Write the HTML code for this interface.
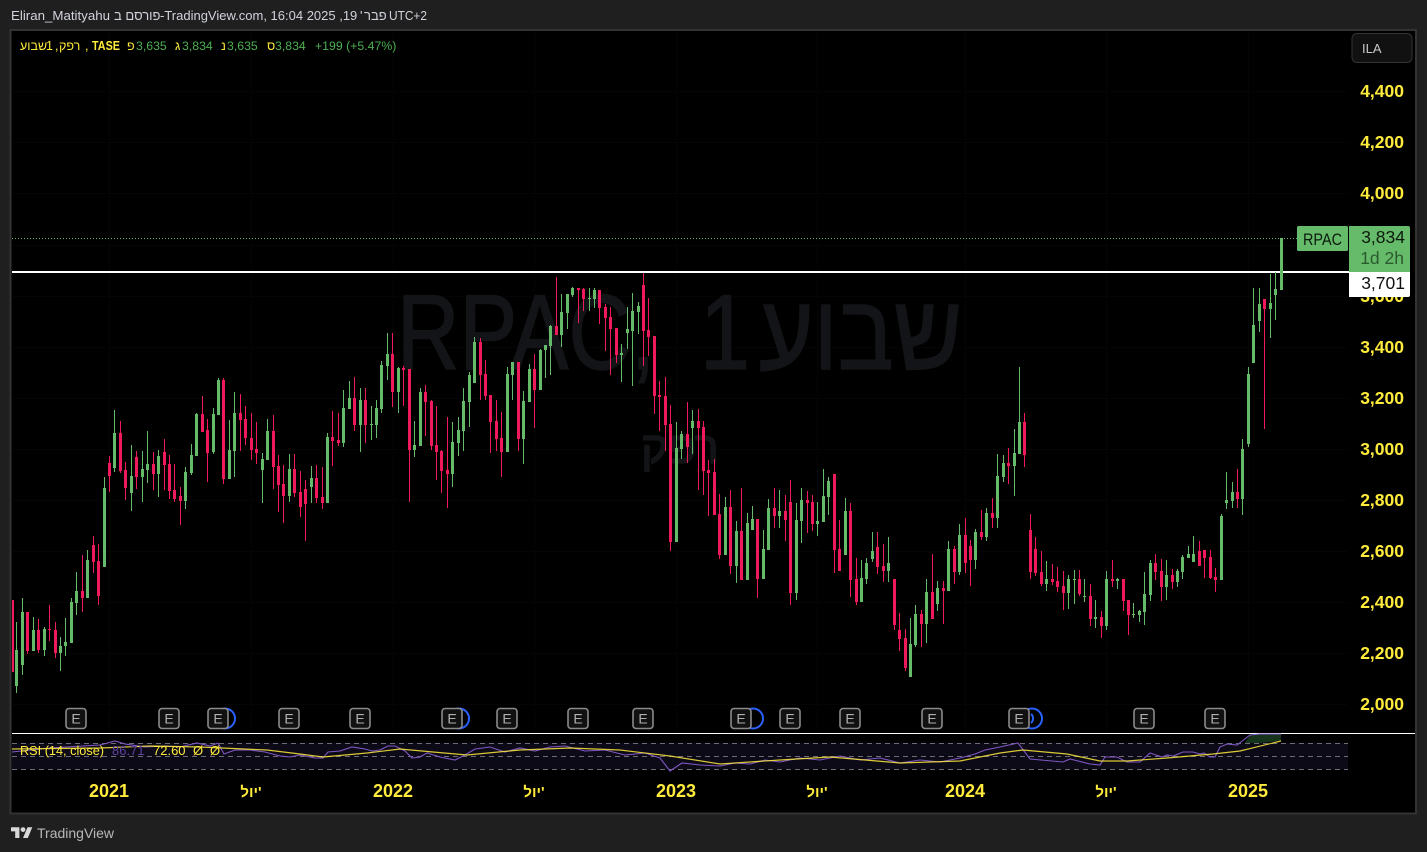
<!DOCTYPE html>
<html lang="he"><head><meta charset="utf-8"><title>RPAC</title>
<style>
html,body{margin:0;padding:0;background:#1f1f1f;width:1427px;height:852px;overflow:hidden}
svg{display:block;position:absolute;left:0;top:0}
text{font-family:"Liberation Sans","Noto Sans CJK JP",sans-serif}
.p{font-size:17.500px;font-weight:700;fill:#ffeb3b;text-anchor:end}
.t{font-size:18px;font-weight:700;fill:#ffeb3b;text-anchor:middle}
.y{font-size:15px;font-weight:700;fill:#ffeb3b;text-anchor:middle}
.l{font-size:12.500px;fill:#ffeb3b}
.g{font-size:12.300px;fill:#4caf50}
.r{font-size:13px;fill:#ffeb3b}
.h{font-size:13px;fill:#d1d4dc}
</style></head><body>
<svg width="1427" height="852" viewBox="0 0 1427 852" xmlns="http://www.w3.org/2000/svg">
<rect width="1427" height="852" fill="#1f1f1f"/>
<rect x="10.500" y="30" width="1405.500" height="783.500" fill="#000" stroke="#333" stroke-width="2"/>

<!-- grid -->
<path shape-rendering="crispEdges" stroke="#050505" stroke-width="1" fill="none" d="M109.500 32V733M251.500 32V733M393.500 32V733M534.500 32V733M676.500 32V733M817.500 32V733M965.500 32V733M1106.500 32V733M1248.500 32V733M12 91.500H1348M12 142.500H1348M12 193.500H1348M12 245.500H1348M12 296.500H1348M12 347.500H1348M12 398.500H1348M12 449.500H1348M12 500.500H1348M12 551.500H1348M12 602.500H1348M12 653.500H1348M12 704.500H1348"/>

<!-- watermark -->
<g fill="#131417" stroke="#131417" stroke-width="1.500">
<text x="397" y="369" font-size="107" textLength="258" lengthAdjust="spacingAndGlyphs">RPAC,</text>
<text x="700" y="369" font-size="107" textLength="50" lengthAdjust="spacingAndGlyphs">1</text>
<text x="759" y="369" font-size="107" textLength="203" lengthAdjust="spacingAndGlyphs">שבוע</text>
<text x="641" y="463" font-size="45" textLength="78" lengthAdjust="spacingAndGlyphs">רפק</text>
</g>

<!-- last price dotted + white line -->
<path shape-rendering="crispEdges" d="M12 238.500H1297" stroke="#66bb6a" stroke-width="1" stroke-dasharray="1 2" fill="none"/>
<rect x="12" y="271" width="1337" height="2" fill="#fff"/>

<!-- green candles -->
<path shape-rendering="crispEdges" fill="#66bb6a" d="M16 622h1V693h-1zM15 650h3V686h-3zM22 598h1V675h-1zM21 612h3V665h-3zM33 617h1V651h-1zM32 630h3V651h-3zM44 627h1V656h-1zM43 629h3V650h-3zM60 637h1V671h-1zM59 646h3V653h-3zM65 618h1V656h-1zM64 642h3V646h-3zM71 598h1V643h-1zM70 602h3V643h-3zM76 572h1V615h-1zM75 591h3V603h-3zM87 550h1V598h-1zM86 560h3V598h-3zM104 477h1V567h-1zM103 488h3V567h-3zM114 410h1V472h-1zM113 433h3V468h-3zM131 445h1V511h-1zM130 476h3V493h-3zM142 451h1V502h-1zM141 469h3V477h-3zM147 431h1V483h-1zM146 464h3V470h-3zM158 450h1V497h-1zM157 456h3V474h-3zM185 467h1V509h-1zM184 472h3V501h-3zM191 444h1V475h-1zM190 455h3V473h-3zM196 413h1V456h-1zM195 414h3V456h-3zM213 408h1V454h-1zM212 414h3V452h-3zM218 378h1V415h-1zM217 380h3V415h-3zM229 420h1V479h-1zM228 450h3V479h-3zM234 392h1V477h-1zM233 413h3V451h-3zM262 453h1V503h-1zM261 459h3V470h-3zM267 419h1V460h-1zM266 431h3V460h-3zM289 454h1V502h-1zM288 469h3V496h-3zM311 466h1V503h-1zM310 478h3V487h-3zM327 433h1V503h-1zM326 437h3V503h-3zM343 390h1V447h-1zM342 408h3V443h-3zM349 381h1V409h-1zM348 398h3V409h-3zM360 388h1V452h-1zM359 400h3V425h-3zM371 406h1V440h-1zM370 424h3V425h-3zM376 400h1V438h-1zM375 408h3V425h-3zM381 361h1V413h-1zM380 365h3V409h-3zM387 333h1V380h-1zM386 354h3V366h-3zM398 367h1V413h-1zM397 368h3V392h-3zM414 421h1V457h-1zM413 445h3V450h-3zM420 388h1V446h-1zM419 392h3V446h-3zM452 422h1V487h-1zM451 442h3V474h-3zM458 417h1V456h-1zM457 430h3V443h-3zM463 388h1V451h-1zM462 401h3V431h-3zM469 372h1V427h-1zM468 375h3V402h-3zM474 337h1V383h-1zM473 342h3V383h-3zM507 367h1V452h-1zM506 374h3V452h-3zM512 362h1V400h-1zM511 362h3V375h-3zM523 391h1V464h-1zM522 401h3V439h-3zM529 364h1V402h-1zM528 369h3V402h-3zM540 349h1V390h-1zM539 350h3V390h-3zM545 345h1V378h-1zM544 345h3V350h-3zM550 325h1V375h-1zM549 326h3V346h-3zM561 294h1V347h-1zM560 312h3V335h-3zM567 294h1V329h-1zM566 294h3V313h-3zM572 287h1V297h-1zM571 288h3V295h-3zM589 288h1V311h-1zM588 298h3V299h-3zM594 288h1V308h-1zM593 290h3V299h-3zM621 344h1V382h-1zM620 353h3V355h-3zM627 307h1V349h-1zM626 329h3V333h-3zM632 293h1V386h-1zM631 311h3V331h-3zM638 302h1V334h-1zM637 306h3V312h-3zM676 422h1V542h-1zM675 448h3V542h-3zM681 431h1V459h-1zM680 434h3V449h-3zM692 410h1V454h-1zM691 421h3V428h-3zM725 497h1V555h-1zM724 507h3V555h-3zM736 521h1V583h-1zM735 531h3V566h-3zM747 513h1V580h-1zM746 523h3V580h-3zM752 506h1V530h-1zM751 519h3V530h-3zM763 530h1V579h-1zM762 549h3V579h-3zM768 499h1V550h-1zM767 508h3V550h-3zM779 490h1V528h-1zM778 511h3V516h-3zM796 503h1V600h-1zM795 520h3V593h-3zM801 488h1V543h-1zM800 500h3V521h-3zM817 502h1V536h-1zM816 521h3V524h-3zM823 469h1V522h-1zM822 496h3V522h-3zM828 477h1V515h-1zM827 481h3V497h-3zM845 498h1V555h-1zM844 511h3V555h-3zM861 560h1V602h-1zM860 578h3V602h-3zM866 558h1V584h-1zM865 563h3V579h-3zM872 532h1V562h-1zM871 551h3V559h-3zM888 537h1V582h-1zM887 563h3V571h-3zM910 618h1V677h-1zM909 644h3V677h-3zM915 605h1V647h-1zM914 614h3V645h-3zM926 579h1V643h-1zM925 592h3V624h-3zM937 581h1V611h-1zM936 588h3V604h-3zM948 541h1V591h-1zM947 549h3V591h-3zM959 524h1V575h-1zM958 535h3V572h-3zM975 529h1V569h-1zM974 532h3V560h-3zM986 508h1V541h-1zM985 513h3V537h-3zM997 454h1V528h-1zM996 476h3V518h-3zM1003 455h1V482h-1zM1002 463h3V477h-3zM1014 429h1V496h-1zM1013 453h3V466h-3zM1019 367h1V454h-1zM1018 422h3V454h-3zM1046 561h1V591h-1zM1045 579h3V584h-3zM1068 575h1V609h-1zM1067 579h3V593h-3zM1074 570h1V604h-1zM1073 579h3V580h-3zM1084 579h1V602h-1zM1083 596h3V597h-3zM1095 600h1V628h-1zM1094 617h3V619h-3zM1106 571h1V630h-1zM1105 579h3V626h-3zM1117 578h1V589h-1zM1116 579h3V581h-3zM1133 603h1V618h-1zM1132 614h3V615h-3zM1139 610h1V622h-1zM1138 611h3V615h-3zM1144 572h1V625h-1zM1143 594h3V612h-3zM1150 560h1V601h-1zM1149 563h3V595h-3zM1166 560h1V600h-1zM1165 575h3V587h-3zM1177 569h1V587h-1zM1176 571h3V582h-3zM1182 555h1V579h-1zM1181 557h3V572h-3zM1188 546h1V558h-1zM1187 554h3V558h-3zM1193 536h1V562h-1zM1192 554h3V562h-3zM1221 514h1V580h-1zM1220 516h3V580h-3zM1226 472h1V509h-1zM1225 500h3V503h-3zM1232 482h1V508h-1zM1231 492h3V501h-3zM1242 439h1V515h-1zM1241 449h3V499h-3zM1248 367h1V447h-1zM1247 374h3V444h-3zM1253 288h1V363h-1zM1252 325h3V363h-3zM1259 288h1V332h-1zM1258 304h3V321h-3zM1270 274h1V338h-1zM1269 303h3V309h-3zM1275 272h1V320h-1zM1274 289h3V295h-3zM1280 238h3V290h-3z"/>

<!-- red candles -->
<path shape-rendering="crispEdges" fill="#ee1a5c" d="M12 600h2V672h-2zM27 612h1V654h-1zM26 612h3V651h-3zM38 619h1V653h-1zM37 630h3V650h-3zM49 605h1V641h-1zM48 629h3V630h-3zM55 622h1V658h-1zM54 630h3V653h-3zM82 555h1V612h-1zM81 591h3V598h-3zM93 536h1V573h-1zM92 545h3V562h-3zM98 544h1V605h-1zM97 561h3V596h-3zM109 456h1V492h-1zM108 463h3V476h-3zM120 421h1V473h-1zM119 433h3V471h-3zM125 462h1V500h-1zM124 470h3V488h-3zM136 451h1V489h-1zM135 457h3V477h-3zM153 452h1V490h-1zM152 464h3V474h-3zM164 439h1V490h-1zM163 452h3V465h-3zM169 455h1V499h-1zM168 464h3V491h-3zM174 464h1V502h-1zM173 490h3V499h-3zM180 487h1V525h-1zM179 496h3V501h-3zM202 396h1V432h-1zM201 414h3V432h-3zM207 419h1V482h-1zM206 430h3V453h-3zM223 378h1V484h-1zM222 380h3V479h-3zM240 394h1V451h-1zM239 413h3V420h-3zM245 406h1V445h-1zM244 419h3V438h-3zM251 413h1V460h-1zM250 438h3V450h-3zM256 422h1V464h-1zM255 449h3V453h-3zM273 415h1V489h-1zM272 431h3V467h-3zM278 455h1V512h-1zM277 466h3V485h-3zM283 465h1V523h-1zM282 484h3V496h-3zM294 454h1V497h-1zM293 469h3V493h-3zM300 471h1V517h-1zM299 492h3V507h-3zM305 480h1V541h-1zM304 489h3V504h-3zM316 465h1V503h-1zM315 478h3V498h-3zM322 467h1V509h-1zM321 497h3V503h-3zM332 411h1V466h-1zM331 437h3V441h-3zM338 413h1V446h-1zM337 440h3V443h-3zM354 377h1V431h-1zM353 398h3V425h-3zM365 388h1V443h-1zM364 400h3V425h-3zM392 333h1V407h-1zM391 354h3V392h-3zM403 366h1V406h-1zM402 368h3V370h-3zM409 369h1V502h-1zM408 369h3V450h-3zM425 385h1V436h-1zM424 392h3V402h-3zM431 400h1V450h-1zM430 401h3V446h-3zM436 406h1V480h-1zM435 445h3V452h-3zM441 450h1V493h-1zM440 451h3V471h-3zM447 417h1V508h-1zM446 470h3V474h-3zM480 338h1V400h-1zM479 342h3V375h-3zM485 360h1V400h-1zM484 374h3V396h-3zM490 395h1V453h-1zM489 395h3V422h-3zM496 400h1V451h-1zM495 421h3V439h-3zM501 412h1V477h-1zM500 438h3V452h-3zM518 362h1V451h-1zM517 362h3V439h-3zM534 354h1V428h-1zM533 369h3V390h-3zM556 277h1V335h-1zM555 326h3V335h-3zM578 288h1V323h-1zM577 288h3V290h-3zM583 288h1V311h-1zM582 289h3V299h-3zM599 290h1V324h-1zM598 290h3V308h-3zM605 304h1V351h-1zM604 307h3V318h-3zM610 307h1V375h-1zM609 317h3V329h-3zM616 328h1V363h-1zM615 328h3V355h-3zM643 273h1V366h-1zM642 285h3V331h-3zM648 298h1V356h-1zM647 330h3V337h-3zM654 336h1V414h-1zM653 336h3V396h-3zM659 381h1V431h-1zM658 395h3V397h-3zM665 377h1V451h-1zM664 396h3V425h-3zM670 405h1V551h-1zM669 424h3V542h-3zM687 402h1V463h-1zM686 434h3V447h-3zM698 409h1V490h-1zM697 421h3V428h-3zM703 421h1V495h-1zM702 427h3V471h-3zM708 460h1V516h-1zM707 470h3V473h-3zM714 459h1V515h-1zM713 472h3V515h-3zM719 494h1V559h-1zM718 514h3V555h-3zM730 490h1V574h-1zM729 507h3V566h-3zM741 488h1V580h-1zM740 531h3V580h-3zM757 519h1V598h-1zM756 519h3V579h-3zM774 488h1V528h-1zM773 508h3V516h-3zM785 495h1V541h-1zM784 511h3V520h-3zM790 480h1V605h-1zM789 502h3V593h-3zM807 491h1V533h-1zM806 500h3V503h-3zM812 495h1V531h-1zM811 502h3V524h-3zM834 474h1V573h-1zM833 474h3V550h-3zM839 520h1V571h-1zM838 549h3V571h-3zM850 503h1V597h-1zM849 511h3V580h-3zM856 558h1V605h-1zM855 579h3V602h-3zM877 532h1V574h-1zM876 547h3V567h-3zM883 544h1V582h-1zM882 566h3V571h-3zM894 579h1V630h-1zM893 579h3V625h-3zM899 613h1V651h-1zM898 630h3V639h-3zM905 629h1V671h-1zM904 638h3V668h-3zM921 610h1V647h-1zM920 614h3V624h-3zM932 554h1V619h-1zM931 592h3V619h-3zM943 581h1V624h-1zM942 588h3V591h-3zM954 546h1V584h-1zM953 549h3V572h-3zM965 518h1V573h-1zM964 535h3V563h-3zM970 540h1V586h-1zM969 546h3V560h-3zM981 510h1V540h-1zM980 532h3V537h-3zM992 498h1V528h-1zM991 513h3V518h-3zM1008 448h1V484h-1zM1007 463h3V466h-3zM1024 413h1V467h-1zM1023 422h3V455h-3zM1030 514h1V579h-1zM1029 530h3V572h-3zM1035 537h1V576h-1zM1034 549h3V573h-3zM1041 551h1V586h-1zM1040 572h3V584h-3zM1052 564h1V585h-1zM1051 579h3V582h-3zM1057 567h1V592h-1zM1056 581h3V587h-3zM1063 571h1V610h-1zM1062 586h3V593h-3zM1079 570h1V596h-1zM1078 579h3V594h-3zM1090 584h1V626h-1zM1089 596h3V619h-3zM1101 611h1V638h-1zM1100 617h3V626h-3zM1112 560h1V587h-1zM1111 579h3V581h-3zM1123 579h1V611h-1zM1122 579h3V601h-3zM1128 600h1V635h-1zM1127 600h3V615h-3zM1155 554h1V580h-1zM1154 563h3V572h-3zM1161 559h1V601h-1zM1160 571h3V587h-3zM1172 569h1V589h-1zM1171 575h3V582h-3zM1199 541h1V566h-1zM1198 551h3V566h-3zM1204 550h1V578h-1zM1203 550h3V558h-3zM1210 550h1V579h-1zM1209 557h3V578h-3zM1215 568h1V592h-1zM1214 577h3V580h-3zM1237 469h1V508h-1zM1236 492h3V499h-3zM1264 299h1V429h-1zM1263 299h3V309h-3z"/>

<!-- E markers -->
<g fill="none" stroke="#2962ff" stroke-width="2">
<circle cx="225" cy="718.500" r="10"/><circle cx="459" cy="718.500" r="10"/><circle cx="753" cy="718.500" r="10"/><circle cx="1032" cy="718.500" r="10"/>
<path d="M1031 714a6 6 0 0 1 0 9"/>
</g>
<g fill="#111" stroke="#8a8a8a" stroke-width="1.600">
<rect x="66" y="708.500" width="20" height="20" rx="3"/><rect x="159" y="708.500" width="20" height="20" rx="3"/><rect x="208" y="708.500" width="20" height="20" rx="3"/><rect x="279" y="708.500" width="20" height="20" rx="3"/><rect x="350" y="708.500" width="20" height="20" rx="3"/><rect x="442" y="708.500" width="20" height="20" rx="3"/><rect x="497" y="708.500" width="20" height="20" rx="3"/><rect x="568" y="708.500" width="20" height="20" rx="3"/><rect x="633" y="708.500" width="20" height="20" rx="3"/><rect x="731" y="708.500" width="20" height="20" rx="3"/><rect x="780" y="708.500" width="20" height="20" rx="3"/><rect x="840" y="708.500" width="20" height="20" rx="3"/><rect x="922" y="708.500" width="20" height="20" rx="3"/><rect x="1009" y="708.500" width="20" height="20" rx="3"/><rect x="1134" y="708.500" width="20" height="20" rx="3"/><rect x="1205" y="708.500" width="20" height="20" rx="3"/>
</g>
<g fill="#b0b0b0" font-size="14" text-anchor="middle">
<text x="76" y="723.500">E</text><text x="169" y="723.500">E</text><text x="218" y="723.500">E</text><text x="289" y="723.500">E</text><text x="360" y="723.500">E</text><text x="452" y="723.500">E</text><text x="507" y="723.500">E</text><text x="578" y="723.500">E</text><text x="643" y="723.500">E</text><text x="741" y="723.500">E</text><text x="790" y="723.500">E</text><text x="850" y="723.500">E</text><text x="932" y="723.500">E</text><text x="1019" y="723.500">E</text><text x="1144" y="723.500">E</text><text x="1215" y="723.500">E</text>
</g>

<!-- RSI pane -->
<rect x="12" y="733" width="1403" height="1" fill="#fff"/>
<rect x="12" y="743" width="1336" height="26" fill="#0d0a18"/>
<path d="M1245 743L1250 735L1260 734L1281 734V741L1260 743Z" fill="#16331c"/>
<path shape-rendering="crispEdges" d="M12 743.500H1348M12 756.500H1348M12 769.500H1348" stroke="#6f6c78" stroke-width="1" stroke-dasharray="5 4" fill="none"/>
<polyline fill="none" stroke="#7e57c2" stroke-width="1.100" points="12,752 50,748 100,745 115,741 125,744 145,747 165,746 180,747 197,743 210,746 218,743 224,754 235,750 250,750 265,752 280,756 290,757 300,755 315,758 323,758 328,752 340,751 352,747 365,749 372,751 380,750 388,746 395,746 405,751 412,758 420,757 427,753 440,757 455,760 465,755 475,749 490,747 505,752 520,748 535,751 550,747 565,746 585,751 605,750 625,755 645,753 660,758 670,771 682,763 700,765 720,766 735,763 750,764 765,760 780,762 800,758 820,760 840,756 860,760 880,758 900,763 920,760 940,762 960,758 975,754 985,750 1000,747 1018,743 1030,759 1063,762 1070,759 1090,764 1100,765 1105,757 1117,757 1127,762 1140,762 1150,753 1162,757 1167,755 1173,756 1183,752 1193,752 1200,754 1204,753 1210,757 1215,757 1220,747 1227,744 1237,745 1250,735 1260,734 1281,734"/>
<polyline fill="none" stroke="#ffeb3b" stroke-opacity=".85" stroke-width="1.200" points="12,749 100,748 150,746 200,747 267,750 300,754 323,757 367,753 400,749 433,752 467,755 520,750 570,748 620,750 670,756 720,764 780,760 830,757 900,763 960,761 1000,753 1023,750 1067,754 1100,761 1127,761 1167,758 1213,754 1240,751 1281,741"/>
<text class="r" x="20" y="755" textLength="84" lengthAdjust="spacingAndGlyphs">RSI (14, close)</text>
<text x="112" y="755" font-size="13" fill="#5e42a0">86.71</text>
<text class="r" x="153" y="755">72.60</text>
<text class="r" x="193" y="755">Ø</text>
<text class="r" x="210" y="755">Ø</text>

<!-- price axis -->
<text class="p" x="1404" y="97">4,400</text>
<text class="p" x="1404" y="148">4,200</text>
<text class="p" x="1404" y="199">4,000</text>
<text class="p" x="1404" y="302">3,600</text>
<text class="p" x="1404" y="353">3,400</text>
<text class="p" x="1404" y="404">3,200</text>
<text class="p" x="1404" y="455">3,000</text>
<text class="p" x="1404" y="506">2,800</text>
<text class="p" x="1404" y="557">2,600</text>
<text class="p" x="1404" y="608">2,400</text>
<text class="p" x="1404" y="659">2,200</text>
<text class="p" x="1404" y="710">2,000</text>

<!-- labels -->
<rect x="1297" y="226" width="51" height="25" rx="1.500" fill="#66bb6a"/>
<text x="1303" y="245" font-size="17" textLength="39" lengthAdjust="spacingAndGlyphs" fill="#0c1a0d">RPAC</text>
<path d="M1349 226H1408a2 2 0 0 1 2 2V272H1349Z" fill="#66bb6a"/>
<text x="1405" y="243" font-size="17.500" text-anchor="end" fill="#0c1a0d">3,834</text>
<text x="1404" y="264" font-size="17.500" text-anchor="end" fill="#2b5a2e">1d 2h</text>
<path d="M1349 272H1410V295a2 2 0 0 1 -2 2H1349Z" fill="#fff"/>
<text x="1405" y="289" font-size="17.500" text-anchor="end" fill="#111">3,701</text>

<!-- ILA -->
<rect x="1352" y="33.500" width="60" height="29" rx="5" fill="#111" stroke="#333"/>
<text x="1362" y="53" font-size="13" fill="#c8c8c8">ILA</text>

<!-- time axis -->
<text class="t" x="109" y="797">2021</text>
<text class="y" x="251" y="797">יול'</text>
<text class="t" x="393" y="797">2022</text>
<text class="y" x="534" y="797">יול'</text>
<text class="t" x="676" y="797">2023</text>
<text class="y" x="817" y="797">יול'</text>
<text class="t" x="965" y="797">2024</text>
<text class="y" x="1106" y="797">יול'</text>
<text class="t" x="1248" y="797">2025</text>

<!-- legend -->
<text class="l" x="20" y="50">שבוע</text>
<text class="l" x="46" y="50">1</text>
<text class="l" x="55" y="50">,</text>
<text class="l" x="59" y="50">רפק</text>
<text class="l" x="85" y="50">,</text>
<text class="l" x="92" y="50" font-weight="700" textLength="28" lengthAdjust="spacingAndGlyphs">TASE</text>
<text class="l" x="127" y="50">פ</text><text class="g" x="136" y="50">3,635</text>
<text class="l" x="175" y="50">ג</text><text class="g" x="182" y="50">3,834</text>
<text class="l" x="221" y="50">נ</text><text class="g" x="227" y="50">3,635</text>
<text class="l" x="267" y="50">ס</text><text class="g" x="275" y="50">3,834</text>
<text class="g" x="315" y="50">+199 (+5.47%)</text>

<!-- header -->
<text class="h" x="11" y="20" textLength="99" lengthAdjust="spacingAndGlyphs">Eliran_Matityahu</text>
<text class="h" x="114" y="20">פורסם ב</text>
<text class="h" x="160" y="20">-TradingView.com, 16:04 2025 ,19</text>
<text class="h" x="360" y="20">'</text>
<text class="h" x="364" y="20">פבר</text>
<text class="h" x="389" y="20" textLength="38" lengthAdjust="spacingAndGlyphs">UTC+2</text>

<!-- footer -->
<g transform="translate(11,823) scale(.6)" fill="#d8d8d8">
<path d="M14 25H7V14H0V7h14v18ZM28 25h-8l7.500-18h8L28 25Z"/><circle cx="20" cy="11" r="4"/>
</g>
<text x="37" y="838" font-size="14" fill="#b8b8b8">TradingView</text>
</svg>
</body></html>
